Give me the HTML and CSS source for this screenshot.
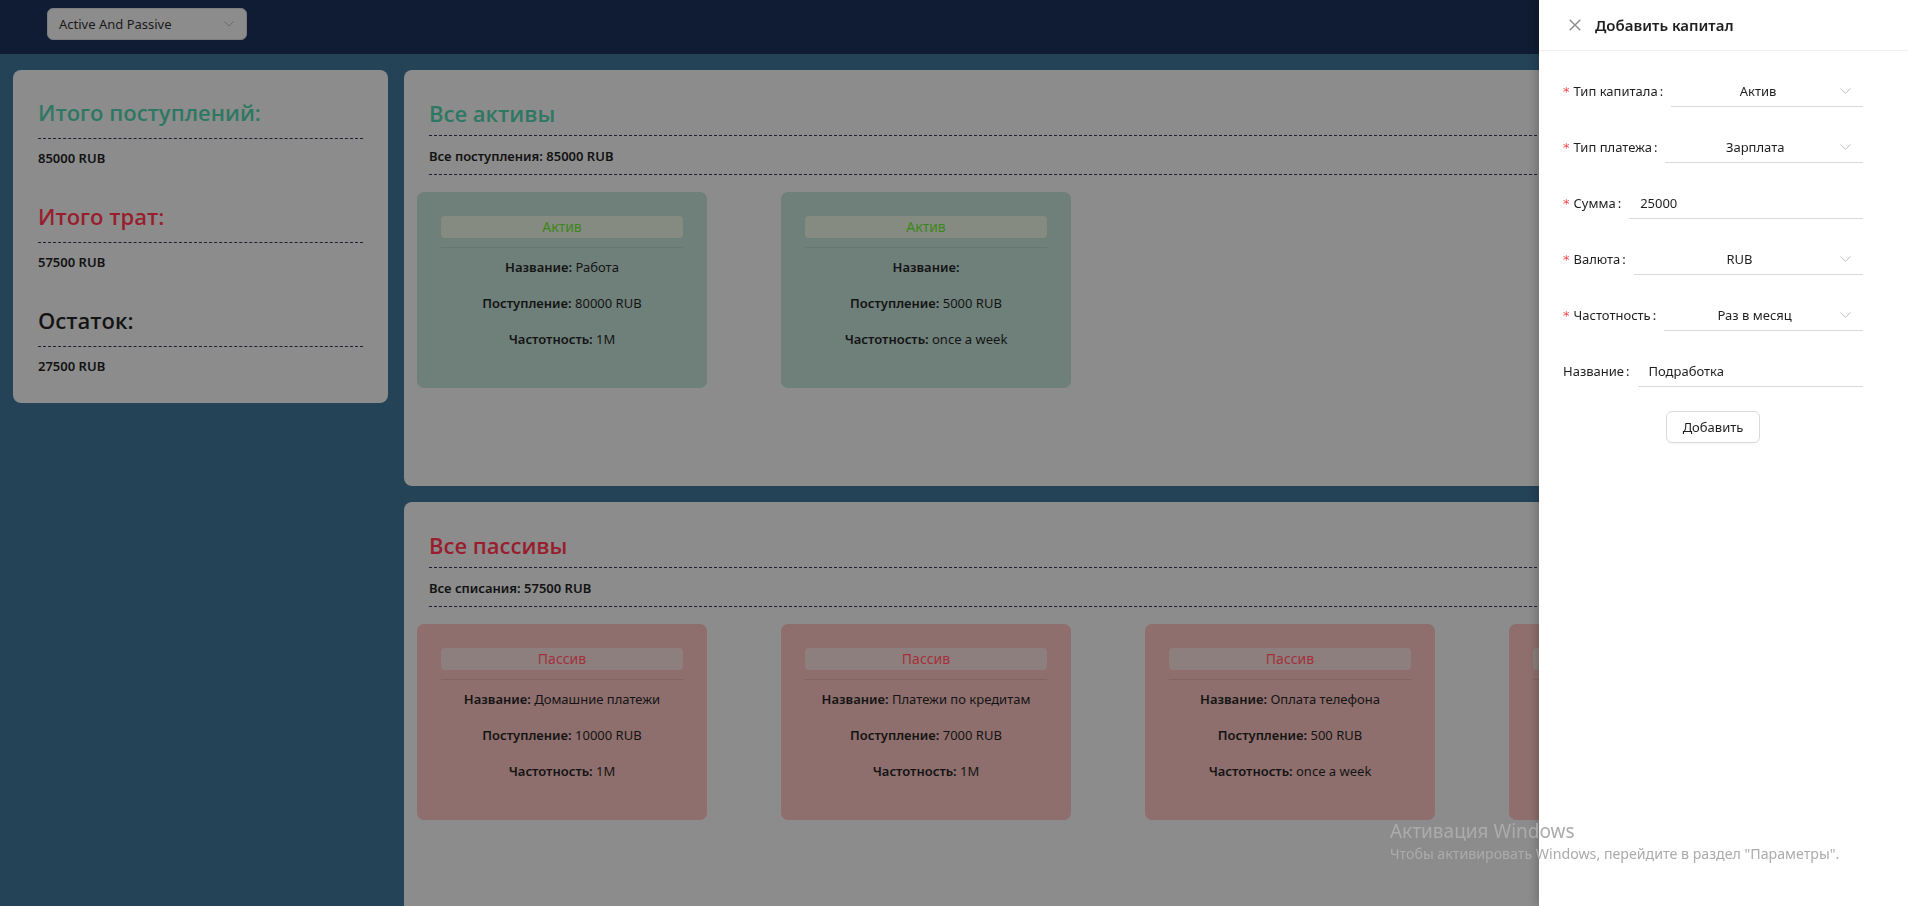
FILE: index.html
```html
<!DOCTYPE html>
<html lang="ru">
<head>
<meta charset="utf-8">
<title>Active And Passive</title>
<link rel="stylesheet" href="styles.css">
</head>
<body>
<header class="topbar">
  <div class="view-select">
    <span>Active And Passive</span>
    <svg class="chev" width="10" height="6" viewBox="0 0 10 6"><path d="M0.5 0.5 L5 5 L9.5 0.5" fill="none" stroke="currentColor" stroke-width="1"/></svg>
  </div>
</header>

<main class="layout">
  <aside class="summary">
    <div class="sum-group">
      <h2 class="sum-title green">Итого поступлений:</h2>
      <div class="dash"></div>
      <div class="sum-value">85000 RUB</div>
    </div>
    <div class="sum-group">
      <h2 class="sum-title red">Итого трат:</h2>
      <div class="dash"></div>
      <div class="sum-value">57500 RUB</div>
    </div>
    <div class="sum-group">
      <h2 class="sum-title dark">Остаток:</h2>
      <div class="dash"></div>
      <div class="sum-value">27500 RUB</div>
    </div>
  </aside>

  <div class="content">
    <section class="panel">
      <div class="panel-head">
        <h2 class="panel-title green">Все активы</h2>
        <div class="dash"></div>
        <div class="panel-sub">Все поступления: 85000 RUB</div>
        <div class="dash"></div>
      </div>
      <div class="items">
        <div class="item asset">
          <div class="tag">Актив</div>
          <div class="divider"></div>
          <p><b>Название:</b> Работа</p>
          <p><b>Поступление:</b> 80000 RUB</p>
          <p><b>Частотность:</b> 1M</p>
        </div>
        <div class="item asset">
          <div class="tag">Актив</div>
          <div class="divider"></div>
          <p><b>Название:</b> </p>
          <p><b>Поступление:</b> 5000 RUB</p>
          <p><b>Частотность:</b> once a week</p>
        </div>
      </div>
    </section>

    <section class="panel">
      <div class="panel-head">
        <h2 class="panel-title red">Все пассивы</h2>
        <div class="dash"></div>
        <div class="panel-sub">Все списания: 57500 RUB</div>
        <div class="dash"></div>
      </div>
      <div class="items">
        <div class="item passive">
          <div class="tag">Пассив</div>
          <div class="divider"></div>
          <p><b>Название:</b> Домашние платежи</p>
          <p><b>Поступление:</b> 10000 RUB</p>
          <p><b>Частотность:</b> 1M</p>
        </div>
        <div class="item passive">
          <div class="tag">Пассив</div>
          <div class="divider"></div>
          <p><b>Название:</b> Платежи по кредитам</p>
          <p><b>Поступление:</b> 7000 RUB</p>
          <p><b>Частотность:</b> 1M</p>
        </div>
        <div class="item passive">
          <div class="tag">Пассив</div>
          <div class="divider"></div>
          <p><b>Название:</b> Оплата телефона</p>
          <p><b>Поступление:</b> 500 RUB</p>
          <p><b>Частотность:</b> once a week</p>
        </div>
        <div class="item passive">
          <div class="tag">Пассив</div>
          <div class="divider"></div>
          <p><b>Название:</b> Аренда</p>
          <p><b>Поступление:</b> 40000 RUB</p>
          <p><b>Частотность:</b> 1M</p>
        </div>
      </div>
    </section>
  </div>
</main>

<div class="drawer">
  <div class="drawer-head">
    <svg class="close" width="12" height="12" viewBox="0 0 12 12"><path d="M0.7 0.7 L11.3 11.3 M11.3 0.7 L0.7 11.3" stroke="currentColor" stroke-width="1.4" fill="none"/></svg>
    <span class="drawer-title">Добавить капитал</span>
  </div>
  <div class="drawer-body">
    <form class="form">
      <div class="row">
        <label class="lbl req">Тип капитала<span class="colon">:</span></label>
        <div class="ctrl select"><span class="val">Актив</span><svg class="arrow" width="11" height="6" viewBox="0 0 11 6"><path d="M0.5 0.5 L5.5 5.3 L10.5 0.5" fill="none" stroke="currentColor" stroke-width="1"/></svg></div>
      </div>
      <div class="row">
        <label class="lbl req">Тип платежа<span class="colon">:</span></label>
        <div class="ctrl select"><span class="val">Зарплата</span><svg class="arrow" width="11" height="6" viewBox="0 0 11 6"><path d="M0.5 0.5 L5.5 5.3 L10.5 0.5" fill="none" stroke="currentColor" stroke-width="1"/></svg></div>
      </div>
      <div class="row">
        <label class="lbl req">Сумма<span class="colon">:</span></label>
        <div class="ctrl input">25000</div>
      </div>
      <div class="row">
        <label class="lbl req">Валюта<span class="colon">:</span></label>
        <div class="ctrl select"><span class="val">RUB</span><svg class="arrow" width="11" height="6" viewBox="0 0 11 6"><path d="M0.5 0.5 L5.5 5.3 L10.5 0.5" fill="none" stroke="currentColor" stroke-width="1"/></svg></div>
      </div>
      <div class="row">
        <label class="lbl req">Частотность<span class="colon">:</span></label>
        <div class="ctrl select"><span class="val">Раз в месяц</span><svg class="arrow" width="11" height="6" viewBox="0 0 11 6"><path d="M0.5 0.5 L5.5 5.3 L10.5 0.5" fill="none" stroke="currentColor" stroke-width="1"/></svg></div>
      </div>
      <div class="row">
        <label class="lbl">Название<span class="colon">:</span></label>
        <div class="ctrl input">Подработка</div>
      </div>
      <div class="actions">
        <button type="button" class="btn">Добавить</button>
      </div>
    </form>
  </div>
</div>

<div class="watermark">
  <div class="wm-title">Активация Windows</div>
  <div class="wm-text">Чтобы активировать Windows, перейдите в раздел "Параметры".</div>
</div>
</body>
</html>
```

FILE: styles.css
```css
* { box-sizing: border-box; }
html, body { margin: 0; height: 100%; }
body {
  background: #244357;
  font-family: "Noto Sans", "Open Sans", sans-serif;
  color: #141414;
  overflow: hidden;
}

.topbar {
  height: 54px;
  background: #0f1c33;
  padding: 8px 0 0 47px;
}
.view-select {
  width: 200px;
  height: 32px;
  background: #8c8c8c;
  border: 1px solid #7d7d7d;
  border-radius: 6px;
  padding: 0 11px;
  display: flex;
  align-items: center;
  justify-content: space-between;
  font-size: 13px;
  color: #1a1a1a;
}
.view-select .chev { color: #6a6a6a; margin-right: 1px; }

.layout {
  display: flex;
  align-items: flex-start;
  gap: 16px;
  padding: 16px 13px;
}

.summary {
  width: 375px;
  flex: none;
  background: #8c8c8c;
  border-radius: 8px;
  padding: 26px 25px 27px;
  display: flex;
  flex-direction: column;
  gap: 32px;
}
.sum-title {
  margin: 0 0 10px;
  font-family: "Open Sans", "Noto Sans", sans-serif;
  font-size: 22px;
  line-height: 32px;
  font-weight: 600;
}
.sum-value {
  margin-top: 9px;
  font-size: 13px;
  line-height: 20px;
  font-weight: 600;
  color: #121212;
}
.green { color: #2e7863; }
.red { color: #981e2e; }
.dark { color: #141414; }

.dash { border-top: 1px dashed #1b2130; }

.content {
  flex: 1;
  display: flex;
  flex-direction: column;
  gap: 16px;
}
.panel {
  background: #8c8c8c;
  border-radius: 8px;
  padding: 27px 13px 98px;
}
.panel-head { padding: 0 0 0 12px; }
.panel-title {
  margin: 0 0 6px;
  font-family: "Open Sans", "Noto Sans", sans-serif;
  font-size: 22px;
  line-height: 32px;
  font-weight: 600;
}
.panel-sub {
  margin: 10px 0 8px;
  font-size: 13px;
  line-height: 20px;
  font-weight: 600;
  color: #121212;
}

.items {
  display: flex;
  gap: 74px;
  margin-top: 17px;
}
.item {
  width: 290px;
  height: 196px;
  flex: none;
  border-radius: 7px;
  padding: 24px 24px 0;
  text-align: center;
  font-size: 13px;
  color: #141414;
}
.item p { margin: 0 0 16px; line-height: 20px; }
.item b { font-weight: 600; }
.tag {
  height: 22px;
  line-height: 22px;
  border-radius: 4px;
  font-size: 14px;
}
.divider { height: 1px; margin: 9px 0 9px; }

.asset { background: #6f807a; }
.asset .tag { background: #858b80; color: #3d861b; }
.asset .divider { background: #66766f; }
.passive { background: #8e6f6d; }
.passive .tag { background: #8c7f7e; color: #a5303a; }
.passive .divider { background: #846461; }

.drawer {
  position: fixed;
  top: 0;
  right: 0;
  bottom: 0;
  width: 369px;
  background: #fff;
  box-shadow: -3px 0 8px rgba(0, 0, 0, 0.18);
  display: flex;
  flex-direction: column;
}
.drawer-head {
  height: 51px;
  flex: none;
  border-bottom: 1px solid #f0f0f0;
  display: flex;
  align-items: center;
  padding: 0 0 0 30px;
  gap: 14px;
}
.close { color: #8c8c8c; }
.drawer-title {
  font-size: 15px;
  font-weight: 600;
  color: #1f1f1f;
}
.drawer-body { padding: 24px; }
.form { width: 300px; }
.row {
  display: flex;
  align-items: center;
  height: 32px;
  margin-bottom: 24px;
  font-size: 13px;
  color: #1f1f1f;
}
.lbl { flex: none; display: flex; align-items: center; white-space: nowrap; }
.lbl.req::before {
  content: "*";
  color: #ff4d4f;
  margin-right: 4px;
  font-family: "DejaVu Sans", sans-serif;
  font-size: 13px;
  line-height: 1;
}
.colon { margin: 0 8px 0 2px; }
.ctrl {
  flex: 1;
  height: 32px;
  border-bottom: 1px solid #d9d9d9;
  display: flex;
  align-items: center;
  min-width: 0;
}
.select { padding: 0 12px 0 11px; }
.select .val { flex: 1; text-align: center; padding-right: 6px; }
.select .arrow { color: #bfbfbf; flex: none; }
.input { padding: 0 11px; }

.actions { display: flex; justify-content: center; }
.btn {
  height: 32px;
  width: 94px;
  padding: 0;
  background: #fff;
  border: 1px solid #d9d9d9;
  border-radius: 6px;
  font-family: inherit;
  font-size: 13px;
  color: #1f1f1f;
  box-shadow: 0 2px 0 rgba(0, 0, 0, 0.02);
}

.watermark {
  position: fixed;
  left: 1390px;
  top: 818px;
  color: #ababab;
  pointer-events: none;
}
.wm-title { font-size: 19px; line-height: 26px; }
.wm-text { font-size: 14.2px; line-height: 20px; }
```
